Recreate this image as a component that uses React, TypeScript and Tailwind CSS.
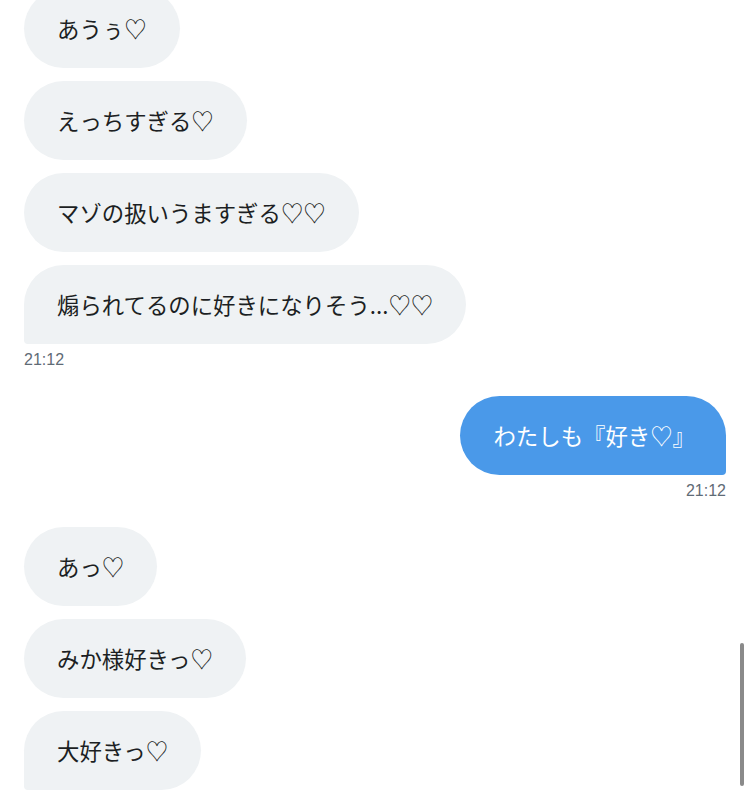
import React from 'react'

type Msg = { text: string; corner?: 'bl' | 'none' }

const groupA: Msg[] = [
  { text: 'あうぅ♡' },
  { text: 'えっちすぎる♡' },
  { text: 'マゾの扱いうますぎる♡♡' },
  { text: '煽られてるのに好きになりそう...♡♡', corner: 'bl' },
]

const groupB: Msg[] = [
  { text: 'あっ♡' },
  { text: 'みか様好きっ♡' },
  { text: '大好きっ♡', corner: 'bl' },
]

const jp = { fontFamily: '"Noto Sans CJK JP", "Noto Sans", sans-serif' }
const latin = { fontFamily: '"Liberation Sans", Arial, sans-serif' }

function Received({ text, corner }: Msg) {
  return (
    <div
      className={
        'self-start bg-[#eff2f4] text-[#1c1f23] text-[22.4px] leading-[33px] px-[33px] py-[23px] rounded-[40px] ' +
        (corner === 'bl' ? 'rounded-bl-[4px]' : '')
      }
      style={jp}
    >
      {text}
    </div>
  )
}

export default function App() {
  return (
    <div className="relative w-[750px] h-[795px] overflow-hidden bg-white">
      <div className="flex flex-col px-[24px] mt-[-11px]">
        <div className="flex flex-col gap-[13px]">
          {groupA.map((m, i) => (
            <Received key={i} {...m} />
          ))}
        </div>
        <div className="mt-[7px] text-[16px] leading-[18px] text-[#5f6b76]" style={latin}>
          21:12
        </div>

        <div
          className="self-end mt-[27px] bg-[#4a99e9] text-white text-[22.4px] leading-[33px] pl-[33px] pr-[31px] py-[23px] rounded-[40px] rounded-br-[4px]"
          style={jp}
        >
          わたしも『好き♡』
        </div>
        <div className="self-end mt-[7px] text-[16px] leading-[18px] text-[#5f6b76]" style={latin}>
          21:12
        </div>

        <div className="flex flex-col gap-[13px] mt-[27px]">
          {groupB.map((m, i) => (
            <Received key={i} {...m} />
          ))}
        </div>
      </div>

      <div className="absolute right-[6px] top-[643px] w-[4px] h-[143px] rounded-full bg-[#8a8a8a]" />
    </div>
  )
}
